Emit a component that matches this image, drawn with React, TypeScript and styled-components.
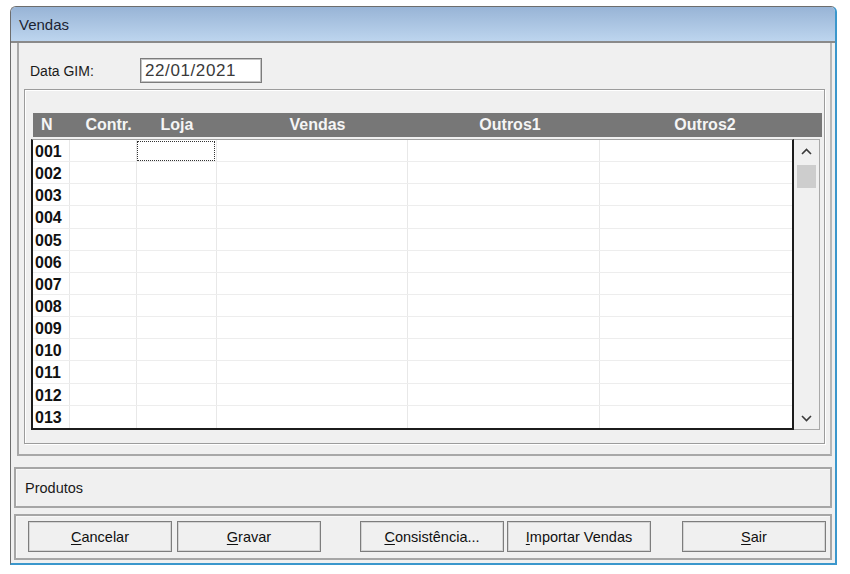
import React from 'react';
import styled, { createGlobalStyle } from 'styled-components';

const GlobalStyle = createGlobalStyle`
  html, body { margin: 0; padding: 0; background: #ffffff; }
  body { font-family: "Liberation Sans", Arial, sans-serif; }
  * { box-sizing: border-box; }
`;

const Page = styled.div`
  padding: 6px 0 0 10px;
`;

const Window = styled.div`
  width: 827px;
  height: 559px;
  display: flex;
  flex-direction: column;
  border: 1px solid #6d6d6d;
  border-right: 2px solid #3b97cc;
  border-bottom: 2px solid #3b97cc;
  border-radius: 6px 6px 0 0;
  overflow: hidden;
  background: #f0f0f0;
`;

const TitleBar = styled.div`
  height: 36px;
  flex: none;
  display: flex;
  align-items: center;
  padding-left: 8px;
  background: linear-gradient(#98b4d6, #bdd5ee);
  border-bottom: 2px solid #8a8a8a;
  font-size: 15px;
  color: #1c2333;
`;

const Client = styled.div`
  flex: 1;
  display: flex;
  flex-direction: column;
  padding: 0 3px 3px 3px;
`;

const MainPanel = styled.div`
  height: 413px;
  margin-left: 3px;
  display: flex;
  flex-direction: column;
  padding: 15px 5px 0 5px;
  border-left: 2px solid #a8a8a8;
  border-right: 2px solid #b8b8b8;
  border-bottom: 2px solid #a8a8a8;
`;

const DataRow = styled.div`
  display: flex;
  align-items: center;
  height: 25px;
  padding-left: 6px;
`;

const Label = styled.span`
  width: 110px;
  font-size: 14px;
  color: #1a1a1a;
`;

const DateInput = styled.div`
  width: 122px;
  height: 25px;
  display: flex;
  align-items: center;
  padding-left: 4px;
  background: #ffffff;
  border: 1px solid #7c7c7c;
  box-shadow: inset 0 0 0 1px #c4c4c4;
  font-size: 17px;
  letter-spacing: 0.6px;
  color: #3a3a3a;
`;

const GroupFrame = styled.div`
  height: 355px;
  margin-top: 6px;
  padding: 23px 2px 0 6px;
  border: 1px solid #9c9c9c;
  box-shadow: inset 1px 1px 0 #ffffff, 1px 1px 0 #ffffff;
`;

const COLS = '37px 67px 80px 191px 192px 192px';

const Header = styled.div`
  height: 24px;
  margin: 0 0 2px 2px;
  display: grid;
  grid-template-columns: 37px 67px 80px 191px 192px 1fr;
  background: #777777;
`;

const HeadCell = styled.div<{ $align?: string; $pl?: number; $pr?: number }>`
  display: flex;
  align-items: center;
  justify-content: ${(p) => p.$align || 'center'};
  padding-left: ${(p) => p.$pl || 0}px;
  padding-right: ${(p) => p.$pr || 0}px;
  font-size: 16px;
  font-weight: bold;
  color: #f5f5f5;
`;

const GridBody = styled.div`
  display: flex;
  height: 291px;
  width: 789px;
`;

const Cells = styled.div`
  width: 763px;
  border-left: 2px solid #1c1c1c;
  border-right: 2px solid #1c1c1c;
  border-bottom: 2px solid #1c1c1c;
  border-top: 1px solid #a0a0a0;
  background: #ffffff;
  display: flex;
  flex-direction: column;
`;

const Row = styled.div`
  height: 22.15px;
  display: grid;
  grid-template-columns: ${COLS};
  border-bottom: 1px solid #ededed;
  &:last-child { border-bottom: none; }
`;

const Cell = styled.div<{ $focus?: boolean }>`
  position: relative;
  border-right: 1px solid #e8e8e8;
  &:last-child { border-right: none; }
  ${(p) =>
    p.$focus
      ? `&::after { content: ''; position: absolute; left: 0; top: 1px; right: 1px; bottom: 0; border: 1px dotted #333; }`
      : ''}
`;

const NumCell = styled(Cell)`
  display: flex;
  align-items: center;
  padding-left: 2px;
  padding-top: 3px;
  font-size: 16px;
  font-weight: bold;
  color: #111111;
`;

const ScrollBar = styled.div`
  width: 26px;
  display: flex;
  flex-direction: column;
  align-items: center;
  border-top: 1px solid #a9a9a9;
  border-right: 1px solid #a9a9a9;
  border-bottom: 1px solid #a9a9a9;
  background: #f0f0f0;
`;

const Arrow = styled.div`
  height: 22px;
  width: 100%;
  display: flex;
  align-items: center;
  justify-content: center;
`;

const Thumb = styled.div`
  width: 19px;
  height: 23px;
  margin-top: 3px;
  background: #cdcdcd;
`;

const Spacer = styled.div`
  flex: 1;
`;

const BottomPanel = styled.div<{ $h: number; $mt: number }>`
  height: ${(p) => p.$h}px;
  margin-top: ${(p) => p.$mt}px;
  display: flex;
  align-items: center;
  border: 2px solid #a6a6a6;
  box-shadow: inset 1px 1px 0 #f8f8f8;
`;

const PanelText = styled.span`
  padding-left: 9px;
  font-size: 14.5px;
  color: #1a1a1a;
`;

const Button = styled.button<{ $ml: number }>`
  width: 144px;
  height: 31px;
  margin: 0 0 1px ${(p) => p.$ml}px;
  padding: 0;
  background: #f0f0f0;
  border: 1px solid #7d7d7d;
  box-shadow: inset 0 0 0 1px #d4d4d4;
  font-family: "Liberation Sans", Arial, sans-serif;
  font-size: 14.5px;
  color: #111111;
  u { text-decoration: underline; text-underline-offset: 2px; }
`;

const rows = ['001', '002', '003', '004', '005', '006', '007', '008', '009', '010', '011', '012', '013'];

const Chevron = ({ up }: { up?: boolean }) => (
  <svg width="11" height="7" viewBox="0 0 11 7">
    <polyline
      points={up ? '1,6 5.5,1.5 10,6' : '1,1 5.5,5.5 10,1'}
      fill="none"
      stroke="#3a3a3a"
      strokeWidth="1.6"
    />
  </svg>
);

const buttons: { acc: string; rest: string; ml: number }[] = [
  { acc: 'C', rest: 'ancelar', ml: 12 },
  { acc: 'G', rest: 'ravar', ml: 5 },
  { acc: 'C', rest: 'onsistência...', ml: 39 },
  { acc: 'I', rest: 'mportar Vendas', ml: 3 },
  { acc: 'S', rest: 'air', ml: 31 },
];

export default function App() {
  return (
    <>
      <GlobalStyle />
      <Page>
        <Window>
          <TitleBar>Vendas</TitleBar>
          <Client>
            <MainPanel>
              <DataRow>
                <Label>Data GIM:</Label>
                <DateInput>22/01/2021</DateInput>
              </DataRow>
              <GroupFrame>
                <Header>
                  <HeadCell $align="flex-start" $pl={8}>N</HeadCell>
                  <HeadCell $pl={10}>Contr.</HeadCell>
                  <HeadCell>Loja</HeadCell>
                  <HeadCell $pl={10}>Vendas</HeadCell>
                  <HeadCell $pl={12}>Outros1</HeadCell>
                  <HeadCell $pr={12}>Outros2</HeadCell>
                </Header>
                <GridBody>
                  <Cells>
                    {rows.map((n, i) => (
                      <Row key={n}>
                        <NumCell>{n}</NumCell>
                        <Cell />
                        <Cell $focus={i === 0} />
                        <Cell />
                        <Cell />
                        <Cell />
                      </Row>
                    ))}
                  </Cells>
                  <ScrollBar>
                    <Arrow>
                      <Chevron up />
                    </Arrow>
                    <Thumb />
                    <Spacer />
                    <Arrow>
                      <Chevron />
                    </Arrow>
                  </ScrollBar>
                </GridBody>
              </GroupFrame>
            </MainPanel>
            <BottomPanel $h={41} $mt={11}>
              <PanelText>Produtos</PanelText>
            </BottomPanel>
            <BottomPanel $h={46} $mt={6}>
              {buttons.map((b, i) => (
                <Button key={i} $ml={b.ml}>
                  <u>{b.acc}</u>
                  {b.rest}
                </Button>
              ))}
            </BottomPanel>
          </Client>
        </Window>
      </Page>
    </>
  );
}
